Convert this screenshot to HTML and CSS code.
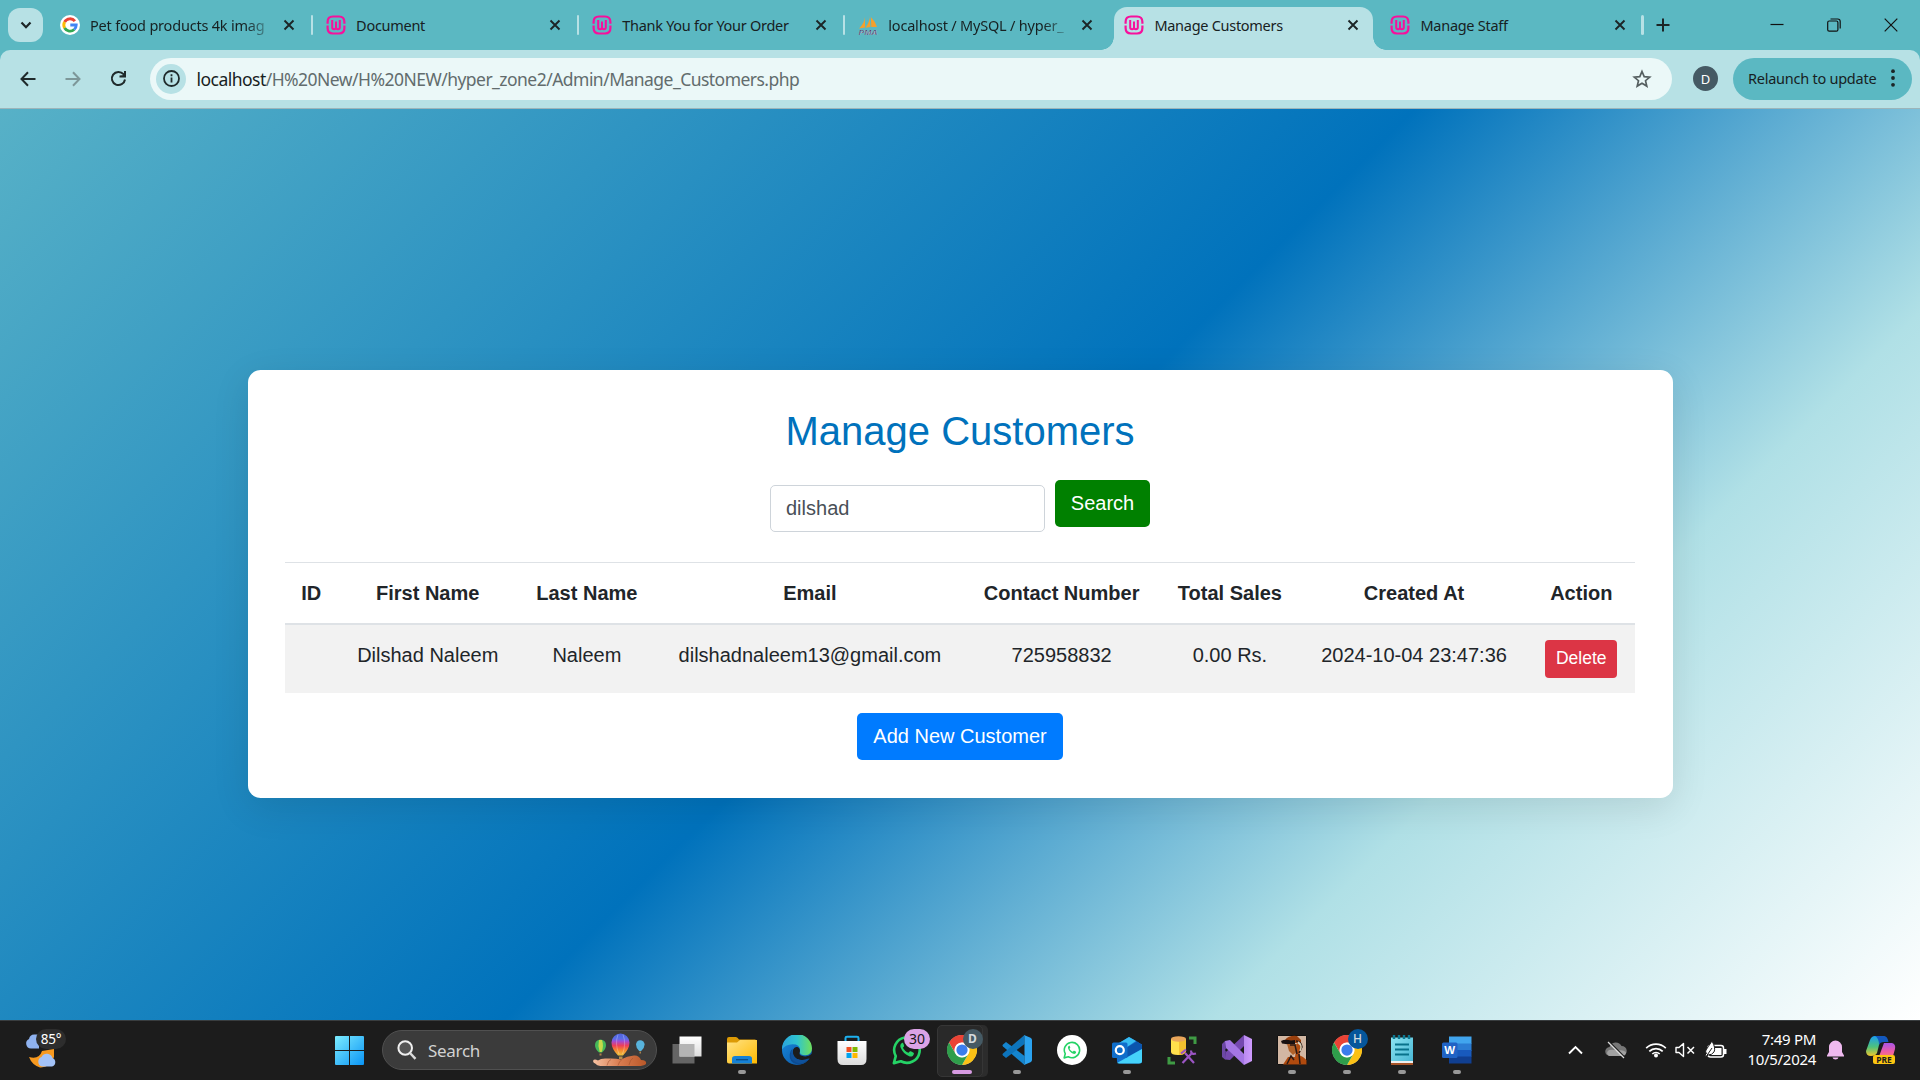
FILE: index.html
```html
<!DOCTYPE html>
<html lang="en">
<head>
<meta charset="utf-8">
<title>Manage Customers</title>
<link rel="stylesheet" href="styles.css">
</head>
<body>
<svg class="defs" width="0" height="0" aria-hidden="true">
  <defs>
    <symbol id="x" viewBox="0 0 12 12"><path d="M1.500 1.500l9 9M10.500 1.500l-9 9" stroke="#1c2526" stroke-width="1.900" fill="none"/></symbol>
    <symbol id="wamp" viewBox="0 0 20 20"><g fill="none" stroke="#f7109c" stroke-width="2.200"><path d="M1.600 8.800V7Q1.600 1.500 7 1.500H13Q18.400 1.500 18.400 7V8.800M1.600 10.600V13Q1.600 18.500 7 18.500H13Q18.400 18.500 18.400 13V10.600"/><path d="M6.200 5V12.500Q6.200 14.200 8.100 14.200T10 12.500V6.500M10 12.500Q10 14.200 11.900 14.200T13.800 12.500V5" stroke-width="2"/></g></symbol>
    <symbol id="chrome" viewBox="0 0 48 48"><circle cx="24" cy="24" r="23.500" fill="#fff"/><path d="M3.200 12A24 24 0 0 1 44.800 12H24A12 12 0 0 0 13.600 30z" fill="#ea4335"/><path d="M44.800 12A24 24 0 0 1 24 48L34.400 30A12 12 0 0 0 24 12z" fill="#fbc116"/><path d="M24 48A24 24 0 0 1 3.200 12L13.600 30A12 12 0 0 0 34.400 30z" fill="#2f9e4b"/><circle cx="24" cy="24" r="11.500" fill="#fff"/><circle cx="24" cy="24" r="9" fill="#3b7ded"/></symbol>
    <symbol id="wa" viewBox="0 0 32 32"><path d="M2 30l2-7.400A13.600 13.600 0 1 1 9.400 28z" fill="none" stroke="#25d366" stroke-width="2.800" stroke-linejoin="round"/><path d="M10.800 8.500c-2 1-2.400 3-1.500 5.200 1.700 4.200 5 7.500 9 9 2.300.8 4.500-.2 5-2.500.2-.9-.1-1.200-.8-1.600l-2.400-1.200c-.7-.3-1.100-.2-1.600.5l-.9 1.100c-2.800-1-4.800-3-6-5.400l1-1.200c.4-.5.4-1 .2-1.500l-1-2.300c-.2-.4-.5-.4-1-.1z" fill="#25d366"/></symbol>
    <linearGradient id="win" x2="1" y2="1"><stop stop-color="#7cecff"/><stop offset="1" stop-color="#0a94f5"/></linearGradient>
    <linearGradient id="fold" x2="1" y2="1"><stop stop-color="#ffe386"/><stop offset="1" stop-color="#ffb900"/></linearGradient>
    <linearGradient id="edge1" x2="1"><stop stop-color="#2aa3dc"/><stop offset=".5" stop-color="#2fc4d0"/><stop offset="1" stop-color="#70e05a"/></linearGradient>
    <linearGradient id="edge2" y2="1" x2="1"><stop stop-color="#178ce0"/><stop offset="1" stop-color="#0c4f9c"/></linearGradient>
    <linearGradient id="store" x2="0" y2="1"><stop stop-color="#fff"/><stop offset="1" stop-color="#dcdcdc"/></linearGradient>
    <linearGradient id="vs" x2="1"><stop stop-color="#b98af0"/><stop offset="1" stop-color="#cf9bff"/></linearGradient>
    <linearGradient id="note" x2="1" y2="1"><stop stop-color="#8be3f1"/><stop offset="1" stop-color="#45b5d3"/></linearGradient>
    <linearGradient id="cop1" x2="0" y2="1"><stop stop-color="#1a9ff0"/><stop offset=".55" stop-color="#4fc27a"/><stop offset="1" stop-color="#f0c62d"/></linearGradient>
    <linearGradient id="cop2" x2="0" y2="1"><stop stop-color="#a855e8"/><stop offset=".5" stop-color="#ee5ca6"/><stop offset="1" stop-color="#fb8a5e"/></linearGradient>
    <linearGradient id="ball" x2="0" y2="1"><stop stop-color="#4e63dc"/><stop offset=".25" stop-color="#5b6ee8"/><stop offset=".35" stop-color="#a04bd5"/><stop offset=".55" stop-color="#ee3f58"/><stop offset=".75" stop-color="#f4852d"/><stop offset="1" stop-color="#edc340"/></linearGradient>
    <linearGradient id="hand" x2="1"><stop stop-color="#f7c2a2"/><stop offset=".5" stop-color="#d97c50"/><stop offset="1" stop-color="#b95829"/></linearGradient>
  </defs>
</svg>

<header class="tabstrip">
  <div class="tab-search"><svg width="12" height="9" viewBox="0 0 12 9"><path d="M1.500 1.500L6 6.200 10.500 1.500" fill="none" stroke="#1c2526" stroke-width="2.200"/></svg></div>
  <div class="tabs">
    <div class="tab">
      <svg class="fav" viewBox="0 0 20 20"><circle cx="10" cy="10" r="10" fill="#fff"/><g fill="none" stroke-width="2.900"><path d="M14.900 6.200A6.200 6.200 0 0 0 4.600 7" stroke="#ea4335"/><path d="M4.600 7A6.200 6.200 0 0 0 4.600 13" stroke="#fbbc05"/><path d="M4.600 13A6.200 6.200 0 0 0 14.200 14.500" stroke="#34a853"/><path d="M14.200 14.500Q16.200 12.800 16.200 10H10.300" stroke="#4285f4"/></g></svg>
      <span class="title fade">Pet food products 4k imag</span><svg class="close"><use href="#x"/></svg>
    </div>
    <div class="tab"><svg class="fav"><use href="#wamp"/></svg><span class="title">Document</span><svg class="close"><use href="#x"/></svg></div>
    <div class="tab"><svg class="fav"><use href="#wamp"/></svg><span class="title">Thank You for Your Order</span><svg class="close"><use href="#x"/></svg></div>
    <div class="tab plain">
      <svg class="fav" viewBox="0 0 20 20"><path d="M7 2Q6.500 8 1 13.500L7 12.500zM11.500 0Q12.500 6 7.500 12.800L12.500 12zM12.800 2Q17 6 19 12L13.300 12z" fill="#f5a02c"/><text x=".5" y="19.500" textLength="19" lengthAdjust="spacingAndGlyphs" class="pma">PMA</text></svg>
      <span class="title fade">localhost / MySQL / hyper_</span><svg class="close"><use href="#x"/></svg>
    </div>
    <div class="tab active"><svg class="fav"><use href="#wamp"/></svg><span class="title">Manage Customers</span><svg class="close"><use href="#x"/></svg></div>
    <div class="tab"><svg class="fav"><use href="#wamp"/></svg><span class="title">Manage Staff</span><svg class="close"><use href="#x"/></svg></div>
  </div>
  <svg class="new-tab" width="14" height="14" viewBox="0 0 14 14"><path d="M7 .5v13M.5 7h13" stroke="#1c2526" stroke-width="2"/></svg>
  <div class="window-buttons">
    <svg width="14" height="14" viewBox="0 0 14 14"><path d="M.5 6.500h13" stroke="#111" stroke-width="1.200"/></svg>
    <svg width="14" height="14" viewBox="0 0 14 14"><g fill="none" stroke="#111" stroke-width="1.200"><rect x=".7" y="3" width="10.200" height="10.200" rx="1.500"/><path d="M3.500 1h7.200Q13.200 1 13.200 3.500V10.500"/></g></svg>
    <svg width="14" height="14" viewBox="0 0 14 14"><path d="M.7.7l12.600 12.600M13.300.7L.7 13.300" stroke="#111" stroke-width="1.200"/></svg>
  </div>
</header>

<nav class="toolbar">
  <div class="nav-buttons">
    <svg width="16" height="16" viewBox="0 0 16 16"><path d="M15.500 8H2M8 1.300L1.500 8 8 14.700" fill="none" stroke="#1f2a2b" stroke-width="2"/></svg>
    <svg width="16" height="16" viewBox="0 0 16 16"><path d="M.5 8H14M8 1.300L14.500 8 8 14.700" fill="none" stroke="#7d9799" stroke-width="2"/></svg>
    <svg width="17" height="17" viewBox="0 0 17 17"><path d="M15 9.500A6.600 6.600 0 1 1 13.500 4.200L15 6" fill="none" stroke="#1f2a2b" stroke-width="2"/><path d="M14 1h2v6.500H9.500v-2L14 5z" fill="#1f2a2b"/></svg>
  </div>
  <div class="omnibox">
    <span class="info"><svg width="17" height="17" viewBox="0 0 17 17"><circle cx="8.500" cy="8.500" r="7.500" fill="none" stroke="#1f2a2b" stroke-width="1.800"/><path d="M8.500 7.500v5M8.500 4.300v1.900" stroke="#1f2a2b" stroke-width="1.800"/></svg></span>
    <span class="url"><b>localhost</b>/H%20New/H%20NEW/hyper_zone2/Admin/Manage_Customers.php</span>
    <svg class="star" width="20" height="20" viewBox="0 0 20 20"><path d="M10 2.500l2.200 5.100 5.500.5-4.200 3.600 1.300 5.400-4.800-2.900-4.800 2.900 1.300-5.400L2.300 8.100l5.500-.5z" fill="none" stroke="#555f60" stroke-width="1.700"/></svg>
  </div>
  <span class="avatar">D</span>
  <div class="relaunch"><span>Relaunch to update</span><svg width="4" height="18" viewBox="0 0 4 18"><g fill="#1c2526"><circle cx="2" cy="2.200" r="1.900"/><circle cx="2" cy="9" r="1.900"/><circle cx="2" cy="15.800" r="1.900"/></g></svg></div>
</nav>

<main class="page">
  <section class="card">
    <h2>Manage Customers</h2>
    <form class="search-form"><input class="field" type="text" value="dilshad"><button class="btn search" type="button">Search</button></form>
    <table class="customers">
      <thead><tr><th>ID</th><th>First Name</th><th>Last Name</th><th>Email</th><th>Contact Number</th><th>Total Sales</th><th>Created At</th><th>Action</th></tr></thead>
      <tbody><tr><td></td><td>Dilshad Naleem</td><td>Naleem</td><td>dilshadnaleem13@gmail.com</td><td>725958832</td><td>0.00 Rs.</td><td>2024-10-04 23:47:36</td><td><button class="btn delete" type="button">Delete</button></td></tr></tbody>
    </table>
    <div class="actions"><button class="btn add" type="button">Add New Customer</button></div>
  </section>
</main>

<footer class="taskbar">
  <div class="weather">
    <svg width="34" height="38" viewBox="0 0 34 38"><path d="M7 17.500a5 5 0 0 1-2-9.500Q6 3 11 3.500H15V17.500z" fill="#8fb2ef"/><path d="M5 26Q15 29 18 20L30 18V26Q26 37 16 36.500 8 34 5 26z" fill="#f7991f"/><path d="M18 35.500a5 5 0 0 1-.5-9.500 6 6 0 0 1 11 1 4.500 4.500 0 0 1-.5 8.500z" fill="#a3c2f7"/></svg>
    <span class="temp">85°</span>
  </div>
  <svg class="start" width="29" height="29" viewBox="0 0 29 29"><path d="M0 1Q0 0 1 0H14V14H0zM15 0H28Q29 0 29 1V14H15zM0 15H14V29H1Q0 29 0 28zM15 15H29V28Q29 29 28 29H15z" fill="url(#win)"/></svg>
  <div class="task-search">
    <svg width="20" height="20" viewBox="0 0 20 20"><circle cx="8.200" cy="8" r="6.800" fill="#555" stroke="#f0f0f0" stroke-width="2"/><path d="M13 13l5.500 5.800" stroke="#dcdcdc" stroke-width="2.400"/></svg>
    <span>Search</span>
    <svg class="balloons" width="54" height="34" viewBox="0 0 54 34"><path d="M18.500 9.500a9 9 0 0 1 18 0Q36.500 16 30 22.500H25Q18.500 16 18.500 9.500z" fill="url(#ball)"/><path d="M25 1.500Q21.500 11 26 21M30 1.500Q33.500 11 29.500 21" fill="none" stroke="#ffffff44"/><path d="M26 23.500h3.500v2.500h-3.500z" fill="#b98f4d"/><path d="M2 12a5.500 5.500 0 0 1 11 0q0 4-4 7.500H6Q2 16 2 12z" fill="#45b85a"/><path d="M6 7Q4.500 13 6.700 19h2Q11 13 9 7" fill="#c6d94a"/><path d="M43 11.500a4.300 4.300 0 0 1 8.600 0q0 3.500-3.400 6.500h-2Q43 15 43 11.500z" fill="#58b3dc"/><path d="M46.500 18.500h1.500v2h-1.500zM6.500 20.500h2v2h-2z" fill="#a9814c"/><path d="M0 28Q1 25.500 5 27.500Q8 25 14 25.500Q22 25 28 26.500Q34 23 41 22.500Q46 22 48 27Q54 27 53 31Q50 33.500 43 33H10Q4 33 3 31Q0 30 0 28z" fill="url(#hand)"/><path d="M14 32.500q1-5 4-6M25 32.500q1-4 4-6M36 32q1-5 4-7" stroke="#9e4d2b88" fill="none"/></svg>
  </div>
  <div class="apps">
    <div class="app"><svg viewBox="0 0 30 30"><path d="M.5 9h22v19.500h-22z" fill="#656565"/><path d="M7.500 1.500h22v20h-22z" fill="url(#store)"/><path d="M7.500 9h15v12.500h-15z" fill="#b4b4b4"/></svg></div>
    <div class="app running"><svg viewBox="0 0 30 30"><path d="M0 4Q0 2 2 2H9Q10.500 2 12 4.500H28Q30 4.500 30 7V28H2Q0 28 0 26z" fill="#dc9a05"/><path d="M0 7.500H10L13 5H30V28.500H2Q0 28.500 0 26z" fill="url(#fold)"/><path d="M5 28.500V23.500Q5 21 8 21H22Q25 21 25 23.500V28.500z" fill="#1581d6"/><path d="M9 24.700h12" stroke="#0a4c88" stroke-width="1.300"/></svg></div>
    <div class="app"><svg viewBox="0 0 31 31"><circle cx="15.500" cy="15.500" r="15.500" fill="url(#edge2)"/><path d="M0 15A15.500 15.500 0 0 1 31 14Q31 20.500 24 21 18 21 18.500 17 19.500 9.500 11 9.500 3 10 0 15z" fill="url(#edge1)"/><path d="M11 14Q8 21 14 25.500 20 29 27 24 29.500 23 27.500 25.500 22 31 16 30.500 7 29 8 20 8.500 16 11 14z" fill="#0d4b91"/><path d="M18.500 17Q17 20.500 20.500 21.500 26 23.500 31 19.500V23L28 24.500Q21 27.500 15 24.500 10 21 11.500 15 13 11.500 16 12.500 19 14 18.500 17z" fill="#1c1c1c"/><path d="M11.500 15Q10 21 15 24.500 21 27.500 28 24Q24 29 18 29.500 9 28 9 20 9.500 16.500 11.500 15z" fill="#0f529c"/></svg></div>
    <div class="app"><svg viewBox="0 0 30 30"><path d="M8.500 8V3Q8.500 1.700 10 1.700H20Q21.500 1.700 21.500 3V8" fill="none" stroke="#1db1ef" stroke-width="2"/><path d="M.5 6h29V24Q29.500 30 24 30H6Q.5 30 .5 24z" fill="url(#store)"/><path d="M9.500 12h5v5h-5z" fill="#f25022"/><path d="M15.500 12h5v5h-5z" fill="#7fba00"/><path d="M9.500 18h5v5h-5z" fill="#00a4ef"/><path d="M15.500 18h5v5h-5z" fill="#ffb900"/></svg></div>
    <div class="app"><svg><use href="#wa"/></svg><span class="count">30</span></div>
    <div class="app current"><svg><use href="#chrome"/></svg><span class="profile">D</span></div>
    <div class="app running"><svg viewBox="0 0 30 30"><path d="M1 9.500L4 7 22.500 21V30L1 11.500Q0 10.500 1 9.500z" fill="#1485cf"/><path d="M1 20.500L4 23 22.500 9V0L1 18.500Q0 19.500 1 20.500z" fill="#0d74bc"/><path d="M22 0L28.500 2.800Q30 3.500 30 5V25Q30 26.500 28.500 27.200L22 30Q22.500 29 22.500 28V2Q22.500 1 22 0z" fill="#2ba3f0"/></svg></div>
    <div class="app"><svg viewBox="0 0 30 30"><circle cx="15" cy="15" r="15" fill="#fff"/><use href="#wa" x="6" y="6" width="18" height="18"/></svg></div>
    <div class="app running"><svg viewBox="0 0 30 30"><path d="M4 10L17 2 30 9.500V26Q30 28.500 27 28.500H8Q5 28.500 5 26z" fill="#1271cf"/><path d="M7 8L17 2 24 6 12 14z" fill="#36bdf2"/><path d="M14 13L25 6.500 30 10V14L15 22z" fill="#0b55ad"/><path d="M5 28L30 14V26Q30 28.500 27 28.500H7z" fill="#45d3fb"/><rect y="7.500" width="15.500" height="15.500" rx="1.500" fill="#0f6ecb"/><circle cx="7.800" cy="15.200" r="4" fill="none" stroke="#fff" stroke-width="2.200"/></svg></div>
    <div class="app"><svg viewBox="0 0 30 30"><path d="M4 4V17Q4 20 11 20T18 17V4z" fill="#ffe04c"/><path d="M12 4H19V17Q17 20 12 20z" fill="#f3c02f"/><ellipse cx="11.500" cy="4" rx="7.500" ry="2.700" fill="#e9a65a"/><path d="M22 3H28V9M2 22V28H8" fill="none" stroke="#3f9b44" stroke-width="3"/><path d="M15.500 28L25 18M18 18L27 28M14 18.500L19 14.500M24 15.500Q24 20 29 18.500" fill="none" stroke="#9b55c4" stroke-width="2.200"/></svg></div>
    <div class="app"><svg viewBox="0 0 30 30"><path d="M0 9L3 6V24.500L0 22z" fill="#6c48a5"/><path d="M3 6L7.500 9.500 3 15 7.500 20.500 3 24.500z" fill="#5c3b93"/><path d="M3 24.500L8 25 22 11V0L4 17z" fill="#7549b0"/><path d="M3 6L8 5 22 19V30L4 13z" fill="#a476e4"/><path d="M22 0L30 4V26L22 30z" fill="url(#vs)"/></svg></div>
    <div class="app running"><svg viewBox="0 0 30 30"><path d="M.5.500h29v29H.5z" fill="#d2b7a3" stroke="#111"/><path d="M8 5Q12 0 20 1L24 5V8H7z" fill="#9b400d"/><path d="M4 6Q8 4 14 5.500L18 5V9L12 9.500 5 8.500z" fill="#181010"/><path d="M10 9H20L21 16 16 20 12 16z" fill="#b0622a"/><path d="M20 8L25 12 22 20 26 22 29.500 25V29.500H6L11 22 18 22z" fill="#b04a0e"/><path d="M13 10L18 10 20 19M10 29L14 21 17 25M22 19L23 29M19 6Q24 6 25 12L22 18" fill="none" stroke="#2a1915" stroke-width="1.500"/><path d="M21 7Q26 10 23 16" fill="none" stroke="#d8d0b8" stroke-width="1.500"/></svg></div>
    <div class="app running"><svg><use href="#chrome"/></svg><span class="profile h">H</span></div>
    <div class="app running"><svg viewBox="0 0 30 30"><path d="M4 2.500H26V29H4z" fill="url(#note)"/><path d="M4 26H26V28H4z" fill="#eee"/><path d="M4 28H26V30H4z" fill="#a65327"/><path d="M7 0v4M12 0v4M17 0v4M22 0v4" stroke="#0b7891" stroke-width="2.400"/><path d="M8 9.500h14M8 14.500h14M8 19.500h14" stroke="#08728b" stroke-width="1.900"/></svg></div>
    <div class="app running"><svg viewBox="0 0 30 30"><path d="M7 1.500H29.500V9H7z" fill="#41a5ee"/><path d="M7 8.500H29.500V16H7z" fill="#2b7cd3"/><path d="M7 15H29.500V22H7z" fill="#185abd"/><path d="M7 21.500H29.500V28.500H7z" fill="#103f91"/><rect y="7.500" width="15.500" height="15.500" rx="1.500" fill="#2063c5"/><text x="7.700" y="19.300" text-anchor="middle" class="word">W</text></svg></div>
  </div>
  <div class="tray">
    <svg class="up" width="15" height="10" viewBox="0 0 15 10"><path d="M1 8.500L7.500 2 14 8.500" fill="none" stroke="#fff" stroke-width="1.900"/></svg>
    <svg class="cloud" width="22" height="18" viewBox="0 0 22 18"><path d="M5 15a4.500 4.500 0 0 1-.5-9 6.500 6.500 0 0 1 12-1A5 5 0 0 1 17 15z" fill="#777"/><path d="M4 15Q0 12 4 9Q9 8 12 10Q17 8 21 11Q21 15 17 15z" fill="#a1a1a1"/><path d="M4.500 1l16 16" stroke="#1c1c1c" stroke-width="1.500"/><path d="M3 1l16 16" stroke="#ddd" stroke-width="1.200"/></svg>
    <svg class="wifi" width="22" height="16" viewBox="0 0 22 16"><g fill="none" stroke="#fff" stroke-width="1.700"><path d="M1.200 6.200a14 14 0 0 1 19.600 0M4.300 9.300a9.500 9.500 0 0 1 13.400 0M7.300 12a5.300 5.300 0 0 1 7.400 0"/></g><circle cx="11" cy="13.500" r="2" fill="#fff"/></svg>
    <svg class="sound" width="20" height="16" viewBox="0 0 20 16"><path d="M1 5.500H4L8.500 1.500V14.500L4 10.500H1z" fill="none" stroke="#fff" stroke-width="1.400" stroke-linejoin="round"/><path d="M12.500 5l6.500 6.500M19 5l-6.500 6.500" stroke="#fff" stroke-width="1.500"/></svg>
    <svg class="battery" width="22" height="18" viewBox="0 0 22 18"><rect x="3" y="4.500" width="15.500" height="11.500" rx="2.500" fill="none" stroke="#fff" stroke-width="1.500"/><path d="M19 8h2.500v5H19z" fill="#fff"/><path d="M7 7H16.500V14H6z" fill="#fff"/><path d="M1 9Q3 6 7 0 11 7 9 11 7 14 3 14L1 16 0 14 1.500 12.500Q0 11 1 9z" fill="#fff" stroke="#1c1c1c"/><path d="M1.500 15L7 7" stroke="#1c1c1c"/></svg>
    <div class="clock"><span>7:49 PM</span><span>10/5/2024</span></div>
    <svg class="bell" width="17" height="20" viewBox="0 0 17 20"><path d="M2 7a6.500 6.500 0 0 1 13 0V12L17 15.500V16.500H0V15.500L2 12zM5.500 17.500h6Q11 19.500 8.500 19.500T5.500 17.500z" fill="#efb9ef"/></svg>
    <div class="copilot"><svg width="30" height="24" viewBox="0 0 30 24"><path d="M9 0H19Q15 2 13 9L11 17Q9.500 20 5 20 0 20 0 15L4 4Q5.500 0 9 0z" fill="url(#cop1)"/><path d="M9 0H18Q21.500 0 22.500 6H18Q14 6 13 9Q13 2 9 0z" fill="#1358bd"/><path d="M18 7H26Q30 8 29 13L27 20Q26 24 20 24H9Q13 22 15 15z" fill="url(#cop2)"/></svg><span>PRE</span></div>
  </div>
</footer>
</body>
</html>
```
FILE: styles.css
```css
* { box-sizing: border-box; }
body {
  margin: 0;
  width: 1920px;
  height: 1080px;
  overflow: hidden;
  display: flex;
  flex-direction: column;
  background: #5bb8c2;
  font-family: "Liberation Sans", Arial, sans-serif;
}
svg { display: block; flex: none; }
.defs { position: absolute; }

/* Browser tab strip */
.tabstrip {
  flex: none;
  height: 50px;
  background: #5bb8c2;
  display: flex;
  align-items: center;
  padding-left: 8px;
  font-family: "Noto Sans", sans-serif;
  color: #172122;
}
.tab-search {
  width: 35px;
  height: 34px;
  border-radius: 12px;
  background: #b7e1e5;
  display: grid;
  place-items: center;
}
.tabs { display: flex; align-self: stretch; padding: 7px 0 0 6px; }
.tab {
  position: relative;
  width: 266.100px;
  height: 43px;
  padding: 0 20px 7px 11px;
  display: flex;
  align-items: center;
}
.tab::after {
  content: "";
  position: absolute;
  right: 2px;
  top: 8px;
  width: 2.500px;
  height: 20px;
  border-radius: 2px;
  background: #b7e1e5;
}
.tab.plain::after { display: none; }
.fav { width: 20px; height: 20px; overflow: visible; }
.title {
  flex: 1;
  min-width: 0;
  margin: 0 8px 0 10px;
  white-space: nowrap;
  font-size: 14.500px;
  letter-spacing: -.28px;
}
.fade { mask-image: linear-gradient(90deg, #000 84%, transparent 100%); letter-spacing: -.2px; }
.close { width: 12px; height: 12px; }
.pma { font: italic bold 7.500px "Liberation Sans", sans-serif; fill: #31305f; stroke: #fff; stroke-width: .2px; }
.word { font: bold 11.500px "Liberation Sans", sans-serif; fill: #fff; }
.tab.active { z-index: 1; }
.tab.active::before {
  content: "";
  position: absolute;
  z-index: -1;
  inset: 0 6.500px 0 1px;
  border-radius: 13px 13px 0 0;
  background: #b7e1e5;
}
.tab.active::after {
  left: -12px;
  right: -6.500px;
  top: auto;
  bottom: 0;
  width: auto;
  height: 13px;
  border-radius: 0;
  background:
    radial-gradient(circle at 0 0, transparent 12.500px, #b7e1e5 13px) left / 13px 13px no-repeat,
    radial-gradient(circle at 100% 0, transparent 12.500px, #b7e1e5 13px) right / 13px 13px no-repeat;
}
.new-tab { margin-left: 10px; }
.window-buttons { margin-left: auto; display: flex; gap: 43px; padding-right: 22px; }

/* Browser toolbar */
.toolbar {
  flex: none;
  height: 59px;
  padding: 8px 8px 9px 20px;
  border-bottom: 1px solid #9cb5ba;
  border-radius: 10px 10px 0 0;
  background: #b7e1e5;
  display: flex;
  align-items: center;
  font-family: "Noto Sans", sans-serif;
}
.nav-buttons { display: flex; align-items: center; gap: 29px; width: 130px; }
.omnibox {
  width: 1522px;
  height: 42px;
  border-radius: 21px;
  background: #ebf8f8;
  display: flex;
  align-items: center;
  padding: 0 20px 0 6px;
}
.info { width: 30px; height: 30px; border-radius: 50%; background: #b7e1e5; display: grid; place-items: center; }
.url { flex: 1; margin-left: 10.500px; font-size: 17.500px; letter-spacing: -.53px; color: #626c6d; white-space: nowrap; }
.url b { font-weight: 400; color: #172122; }
.avatar {
  width: 25px;
  height: 25px;
  margin: 0 15px 0 21px;
  border-radius: 50%;
  background: #455a64;
  color: #fff;
  font-size: 13px;
  display: grid;
  place-items: center;
}
.relaunch {
  width: 179px;
  height: 42px;
  border-radius: 21px;
  background: #5bb8c2;
  display: flex;
  align-items: center;
  justify-content: space-between;
  padding: 0 17px 1px 15px;
  font-size: 14.500px;
  letter-spacing: -.25px;
  white-space: nowrap;
  color: #172122;
}

/* Customer page */
.page {
  flex: 1;
  display: flex;
  align-items: flex-start;
  justify-content: center;
  padding-top: 261px;
  background: linear-gradient(135deg, #57b1c7 0%, #0072bc 50%, #b0e0e6 75%, #fff 100%);
}
.card {
  width: 1425px;
  padding: 36.500px 37.500px 38.500px;
  border-radius: 12.500px;
  background: #fff;
  box-shadow: 0 10px 37px rgba(0, 0, 0, .1);
  color: #212529;
  font-size: 20px;
  line-height: 1.500;
}
h2 { margin: 0 0 25px; font-size: 40px; font-weight: 400; line-height: 48px; text-align: center; color: #0072bc; }
.search-form { display: flex; justify-content: center; gap: 10px; margin-bottom: 30px; }
.field {
  width: 275px;
  height: 47px;
  margin-top: 5px;
  padding: 0 15px;
  border: 1px solid #ced4da;
  border-radius: 5px;
  font: 20px "Liberation Sans", Arial, sans-serif;
  color: #495057;
}
.btn { border: 0; border-radius: 5px; color: #fff; font: 20px "Liberation Sans", Arial, sans-serif; }
.search { width: 95px; height: 47px; padding: 0; background: #008000; }
.customers { width: 100%; border-collapse: collapse; text-align: center; }
th, td { padding: 15px; border-top: 1px solid #dee2e6; vertical-align: top; }
th { border-bottom: 2px solid #dee2e6; }
td { background: #f2f2f2; }
td .btn { display: block; margin: 0 auto; }
.delete { width: 72px; height: 38px; padding: 0; background: #dc3545; font-size: 17.500px; border-radius: 4px; }
.actions { display: flex; justify-content: center; margin-top: 20px; }
.add { width: 206px; height: 47px; padding: 0; background: #007bff; }

/* Desktop taskbar */
.taskbar {
  flex: none;
  height: 60px;
  padding-bottom: 1px;
  border-top: 1px solid #393d3f;
  background: #1c1c1c;
  display: flex;
  align-items: center;
  color: #fff;
  font-family: "Noto Sans", sans-serif;
}
.weather { position: relative; width: 335px; height: 38px; padding-left: 24px; }
.temp { position: absolute; left: 36px; top: -2px; width: 30px; height: 20px; border-radius: 10px; background: #2d2d2d; font-size: 13.500px; line-height: 20px; text-align: center; letter-spacing: -.3px; }
.task-search {
  width: 275px;
  height: 40px;
  margin-left: 18px;
  padding: 0 9px 0 14px;
  border: 1px solid #505050;
  border-radius: 20px;
  background: #3b3b3b;
  display: flex;
  align-items: center;
  font-size: 17px;
  color: #d2d2d2;
}
.task-search span { margin-left: 11px; letter-spacing: -.3px; }
.balloons { margin-left: auto; }
.apps { display: flex; margin-left: 2px; }
.app { position: relative; width: 55px; height: 58px; display: grid; place-items: center; }
.app svg { width: 30px; height: 30px; z-index: 1; }
.app.running::after, .app.current::after {
  content: "";
  position: absolute;
  left: 23.500px;
  bottom: 5px;
  width: 8px;
  height: 4px;
  border-radius: 2px;
  background: #989898;
}
.app.current::after { left: 17.500px; width: 20px; background: #d79be2; z-index: 1; }
.app.current::before {
  content: "";
  position: absolute;
  left: 2.500px;
  top: 4px;
  width: 44px;
  height: 50px;
  border: 1px solid #363636;
  border-radius: 5px;
  background: #292929;
  box-shadow: 5px 0 0 #2c2c2c;
}
.count, .profile { position: absolute; z-index: 2; text-align: center; }
.count { left: 25px; top: 8px; width: 26px; height: 20px; border-radius: 10px; background: #dba2e6; color: #161616; font-size: 14px; line-height: 20px; }
.profile { left: 28.500px; top: 8px; width: 20px; height: 20px; border-radius: 50%; background: #455a64; color: #d3dade; font: bold 12px/20px "Noto Sans", sans-serif; }
.profile.h { background: #05569b; font-weight: 500; }
.tray { flex: 1; display: flex; align-items: center; padding-left: 84px; }
.cloud { margin-left: 22px; }
.wifi { margin-left: 18px; }
.sound { margin-left: 8px; }
.battery { margin-left: 10px; }
.clock { width: 89px; padding-bottom: 2px; display: flex; flex-direction: column; align-items: flex-end; font-size: 15px; line-height: 20px; letter-spacing: -.3px; }
.bell { margin-left: 11px; }
.copilot { position: relative; margin-left: 22px; height: 28px; }
.copilot span { position: absolute; left: 7px; top: 19px; width: 22px; height: 9px; border-radius: 2px; background: #fcc511; color: #1c1c1c; font: bold 8.500px/9px "Noto Sans", sans-serif; text-align: center; }
```
